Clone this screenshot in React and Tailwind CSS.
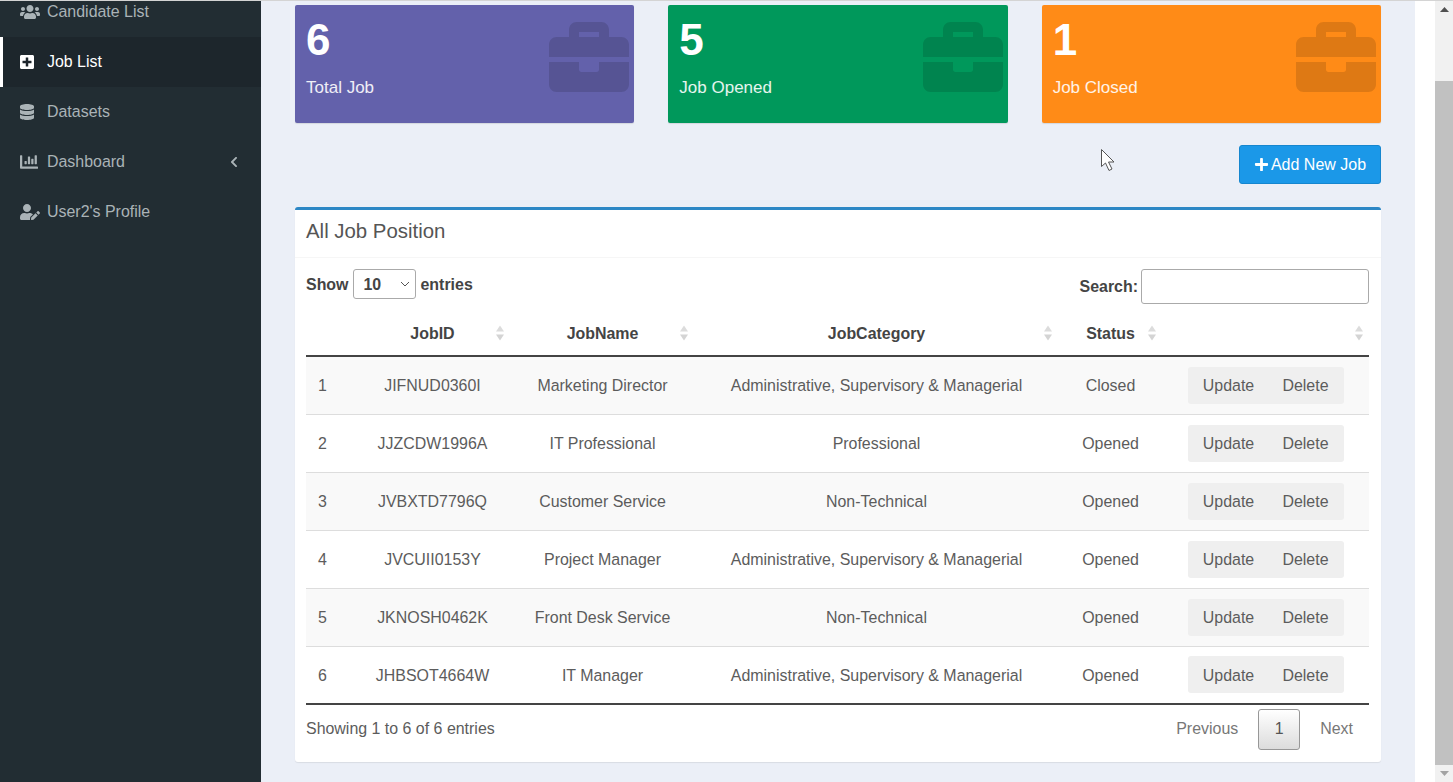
import React from "react";
import { FaUsers, FaPlusSquare, FaDatabase, FaChartBar, FaUserEdit, FaChevronLeft, FaBriefcase, FaPlus } from "react-icons/fa";

const nav = [
  { label: "Candidate List", Icon: FaUsers, size: 20 },
  { label: "Job List", Icon: FaPlusSquare, size: 16, active: true, nudge: true },
  { label: "Datasets", Icon: FaDatabase, size: 16, nudge: true },
  { label: "Dashboard", Icon: FaChartBar, size: 18 , chevron: true },
  { label: "User2's Profile", Icon: FaUserEdit, size: 20 },
];

const cards = [
  { n: "6", label: "Total Job", bg: "bg-[#6361ab]" },
  { n: "5", label: "Job Opened", bg: "bg-[#00985b]" },
  { n: "1", label: "Job Closed", bg: "bg-[#ff8b17]" },
];

const rows = [
  ["1", "JIFNUD0360I", "Marketing Director", "Administrative, Supervisory & Managerial", "Closed"],
  ["2", "JJZCDW1996A", "IT Professional", "Professional", "Opened"],
  ["3", "JVBXTD7796Q", "Customer Service", "Non-Technical", "Opened"],
  ["4", "JVCUII0153Y", "Project Manager", "Administrative, Supervisory & Managerial", "Opened"],
  ["5", "JKNOSH0462K", "Front Desk Service", "Non-Technical", "Opened"],
  ["6", "JHBSOT4664W", "IT Manager", "Administrative, Supervisory & Managerial", "Opened"],
];

function Sort() {
  return (
    <svg width="8" height="16" viewBox="0 0 8 16" className="absolute right-[6px] top-[13px]">
      <path d="M4 0.5 L8 6.5 H0 Z" fill="#dcdcdc" />
      <path d="M4 15.5 L8 9.5 H0 Z" fill="#d4d4d4" />
    </svg>
  );
}

function Head({ children }) {
  return (
    <th className="relative h-[44px] p-0 pl-[1px] text-center text-[#444] font-bold border-b-2 border-[#444]">
      {children}
      <Sort />
    </th>
  );
}

export default function App() {
  return (
    <div className="flex flex-col h-screen w-full overflow-hidden bg-white text-[15.95px] text-[#5c5c5c] font-['Liberation_Sans',Arial,sans-serif]">
      <div className="h-px shrink-0 bg-[#d4d4d4]" />
      <div className="flex flex-1 min-h-0">
        <aside className="w-[261px] shrink-0 bg-[#222d33] overflow-hidden">
          <ul className="-mt-[14px]">
            {nav.map(({ label, Icon, size, active, chevron, nudge }) => (
              <li
                key={label}
                className={`h-[50px] flex items-center border-l-[3px] pr-[21px] ${
                  active ? "bg-[#1d262c] border-white text-white" : "border-transparent text-[#aab3b7]"
                }`}
              >
                <span className="w-[20px] ml-[17px] mr-[7px] flex items-center justify-start">
                  <Icon size={size} className={nudge ? "-ml-px" : ""} />
                </span>
                <span className="flex-1">{label}</span>
                {chevron && <FaChevronLeft size={12} />}
              </li>
            ))}
          </ul>
        </aside>

        <main className="flex-1 min-w-0 bg-[#ebeff7] px-[34px] pt-[4px]">
          <div className="grid grid-cols-3 gap-[34px]">
            {cards.map((c) => (
              <div key={c.label} className={`${c.bg} relative h-[118px] rounded-[2px] pl-[11px] pt-[12px] text-white overflow-hidden shadow-[0_1px_1px_rgba(0,0,0,0.1)]`}>
                <div className="text-[44px] leading-[46px] font-bold">{c.n}</div>
                <div className="mt-[15px] text-[17px] leading-[20px] text-white/90">{c.label}</div>
                <FaBriefcase size={80} className="absolute right-[5px] top-[12px] text-black/[0.13]" />
              </div>
            ))}
          </div>

          <div className="flex justify-end mt-[22px]">
            <button className="h-[39px] w-[142px] flex items-center justify-center gap-[2px] rounded-[3px] border border-[#1586cf] bg-[#1b98e8] text-white text-[16px]">
              <FaPlus size={15} />
              Add New Job
            </button>
          </div>

          <section className="mt-[23px] h-[555px] bg-white rounded-[3px] border-t-[3px] border-[#2c87c5] shadow-[0_1px_1px_rgba(0,0,0,0.08)]">
            <h2 className="h-[48px] flex items-center pl-[11px] pb-[5px] text-[20.4px] text-[#555] border-b border-[#f6f6f6]">All Job Position</h2>
            <div className="pl-[11px] pr-[12px]">
              <div className="flex justify-between pt-[11px]">
                <div className="flex items-center h-[30px] font-bold text-[#444]">
                  <span className="pt-[2px]">Show</span>
                  <span className="w-[63px] h-[30px] ml-[4px] mr-[5px] flex items-center justify-between pl-[10px] pr-[5px] rounded-[3px] border border-[#aaa] bg-white">
                    <span className="pt-[2px]">10</span>
                    <svg width="10" height="6" viewBox="0 0 10 6" fill="none" stroke="#555" strokeWidth="1"><path d="M1 1 L5 5 L9 1" /></svg>
                  </span>
                  <span className="pt-[2px]">entries</span>
                </div>
                <div className="flex items-center gap-[3px] h-[35px] font-bold text-[#444]">
                  Search:
                  <input className="w-[228px] h-[35px] rounded-[3px] border border-[#aaa] bg-white" />
                </div>
              </div>

              <table className="w-full table-fixed border-collapse mt-[8px]">
                <colgroup>
                  <col className="w-[48px]" />
                  <col className="w-[156px]" />
                  <col className="w-[184px]" />
                  <col className="w-[364px]" />
                  <col className="w-[104px]" />
                  <col />
                </colgroup>
                <thead>
                  <tr>
                    <th className="h-[44px] p-0 border-b-2 border-[#444]" />
                    <Head>JobID</Head>
                    <Head>JobName</Head>
                    <Head>JobCategory</Head>
                    <Head>Status</Head>
                    <Head />
                  </tr>
                </thead>
                <tbody>
                  {rows.map((r, i) => (
                    <tr key={r[0]} className={`h-[58px] ${i % 2 === 0 ? "bg-[#f9f9f9]" : "bg-white"} ${i === 5 ? "border-b-2 border-[#444]" : "border-b border-[#ddd]"}`}>
                      <td className="p-0 pl-[12px] pt-[2px]">{r[0]}</td>
                      <td className="p-0 pl-[1px] pt-[2px] text-center">{r[1]}</td>
                      <td className="p-0 pl-[1px] pt-[2px] text-center">{r[2]}</td>
                      <td className="p-0 pl-[1px] pt-[2px] text-center">{r[3]}</td>
                      <td className="p-0 pl-[1px] pt-[2px] text-center">{r[4]}</td>
                      <td className="p-0 pl-[26px]">
                        <div className="w-[156px] h-[37px] flex items-center rounded-[3px] bg-[#efefef]">
                          <button className="w-[78px] pl-[3px] pt-[2px] text-center">Update</button>
                          <button className="w-[78px] pl-[1px] pt-[2px] text-center">Delete</button>
                        </div>
                      </td>
                    </tr>
                  ))}
                </tbody>
              </table>

              <div className="flex items-center justify-between h-[48px]">
                <span>Showing 1 to 6 of 6 entries</span>
                <div className="flex items-center pr-[16px] text-[#777]">
                  <span>Previous</span>
                  <span className="w-[42px] h-[41px] mx-[20px] flex items-center justify-center rounded-[3px] border border-[#979797] bg-gradient-to-b from-white to-[#dcdcdc] text-[#555]">1</span>
                  <span>Next</span>
                </div>
              </div>
            </div>
          </section>
        </main>

        <div className="w-[20px] shrink-0 bg-white" />

        <div className="w-[18px] shrink-0 bg-[#f1f1f1] flex flex-col items-stretch">
          <div className="h-[17px] flex items-center justify-center">
            <svg width="9" height="5" viewBox="0 0 9 5"><path d="M4.5 0 L9 5 H0 Z" fill="#505050" /></svg>
          </div>
          <div className="h-[63px]" />
          <div className="flex-1 bg-[#c1c1c1]" />
          <div className="h-[17px] flex items-center justify-center">
            <svg width="9" height="5" viewBox="0 0 9 5"><path d="M4.5 5 L9 0 H0 Z" fill="#a3a3a3" /></svg>
          </div>
        </div>
      </div>

      <svg width="16" height="24" viewBox="0 0 16 24" className="absolute left-[1100px] top-[148px]">
        <path d="M1.5 1.5 V18.5 L5.5 15 L9 22.5 L12 21 L8.5 14 H14 Z" fill="#fff" stroke="#555" strokeWidth="1" />
      </svg>
    </div>
  );
}
